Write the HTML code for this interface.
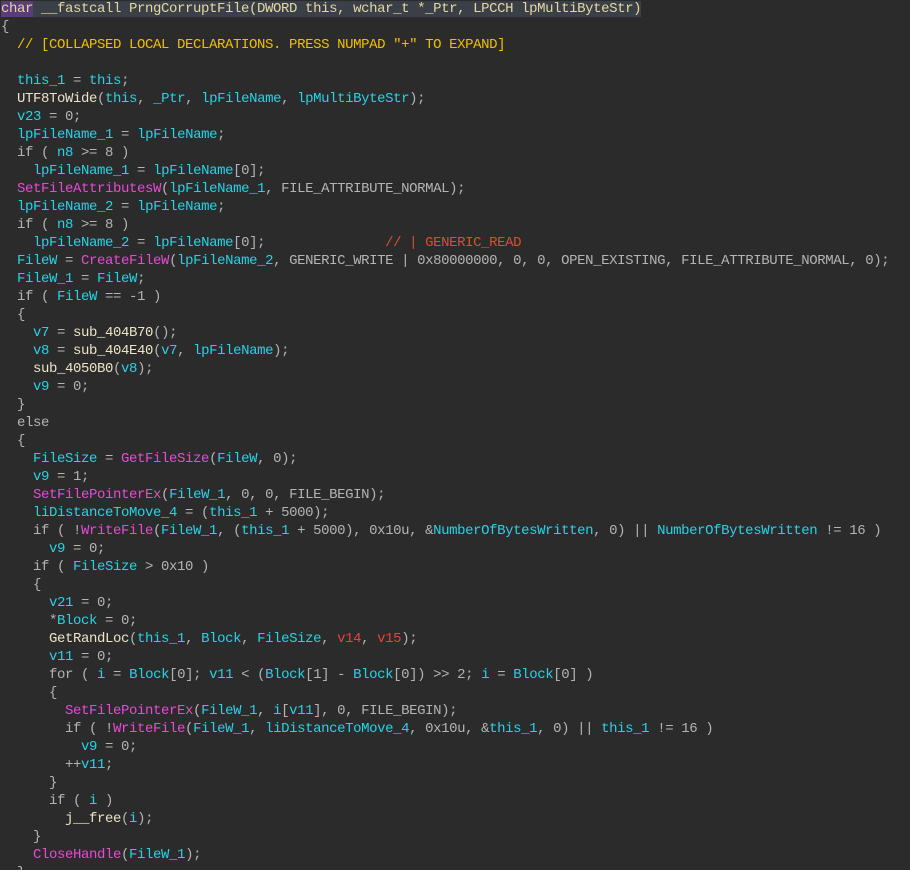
<!DOCTYPE html>
<html><head><meta charset="utf-8"><style>
html,body{margin:0;padding:0;background:#2b2b2b;width:910px;height:870px;overflow:hidden}
pre{margin:0;padding:0 0 0 1px;font-family:"Liberation Mono","DejaVu Sans Mono",monospace;font-size:14px;letter-spacing:-0.4px;line-height:18px;color:#b4b4b4;white-space:pre}
.v{color:#27d3e6}.f{color:#e84ad6}.u{color:#ece4c6}.r{color:#e8413c}.c{color:#d9502e}.y{color:#f0c000}
.h{background:#3b3f47;color:#e4d8a2}.k{background:#5b3c7a}
</style></head><body><pre><span class="h"><span class="k">char</span> __fastcall PrngCorruptFile(DWORD this, wchar_t *_Ptr, LPCCH lpMultiByteStr)</span>
{
  <span class="y">// [COLLAPSED LOCAL DECLARATIONS. PRESS NUMPAD "+" TO EXPAND]</span>

  <span class="v">this_1</span> = <span class="v">this</span>;
  <span class="u">UTF8ToWide</span>(<span class="v">this</span>, <span class="v">_Ptr</span>, <span class="v">lpFileName</span>, <span class="v">lpMultiByteStr</span>);
  <span class="v">v23</span> = 0;
  <span class="v">lpFileName_1</span> = <span class="v">lpFileName</span>;
  if ( <span class="v">n8</span> &gt;= 8 )
    <span class="v">lpFileName_1</span> = <span class="v">lpFileName</span>[0];
  <span class="f">SetFileAttributesW</span>(<span class="v">lpFileName_1</span>, FILE_ATTRIBUTE_NORMAL);
  <span class="v">lpFileName_2</span> = <span class="v">lpFileName</span>;
  if ( <span class="v">n8</span> &gt;= 8 )
    <span class="v">lpFileName_2</span> = <span class="v">lpFileName</span>[0];               <span class="c">// | GENERIC_READ</span>
  <span class="v">FileW</span> = <span class="f">CreateFileW</span>(<span class="v">lpFileName_2</span>, GENERIC_WRITE | 0x80000000, 0, 0, OPEN_EXISTING, FILE_ATTRIBUTE_NORMAL, 0);
  <span class="v">FileW_1</span> = <span class="v">FileW</span>;
  if ( <span class="v">FileW</span> == -1 )
  {
    <span class="v">v7</span> = <span class="u">sub_404B70</span>();
    <span class="v">v8</span> = <span class="u">sub_404E40</span>(<span class="v">v7</span>, <span class="v">lpFileName</span>);
    <span class="u">sub_4050B0</span>(<span class="v">v8</span>);
    <span class="v">v9</span> = 0;
  }
  else
  {
    <span class="v">FileSize</span> = <span class="f">GetFileSize</span>(<span class="v">FileW</span>, 0);
    <span class="v">v9</span> = 1;
    <span class="f">SetFilePointerEx</span>(<span class="v">FileW_1</span>, 0, 0, FILE_BEGIN);
    <span class="v">liDistanceToMove_4</span> = (<span class="v">this_1</span> + 5000);
    if ( !<span class="f">WriteFile</span>(<span class="v">FileW_1</span>, (<span class="v">this_1</span> + 5000), 0x10u, &amp;<span class="v">NumberOfBytesWritten</span>, 0) || <span class="v">NumberOfBytesWritten</span> != 16 )
      <span class="v">v9</span> = 0;
    if ( <span class="v">FileSize</span> &gt; 0x10 )
    {
      <span class="v">v21</span> = 0;
      *<span class="v">Block</span> = 0;
      <span class="u">GetRandLoc</span>(<span class="v">this_1</span>, <span class="v">Block</span>, <span class="v">FileSize</span>, <span class="r">v14</span>, <span class="r">v15</span>);
      <span class="v">v11</span> = 0;
      for ( <span class="v">i</span> = <span class="v">Block</span>[0]; <span class="v">v11</span> &lt; (<span class="v">Block</span>[1] - <span class="v">Block</span>[0]) &gt;&gt; 2; <span class="v">i</span> = <span class="v">Block</span>[0] )
      {
        <span class="f">SetFilePointerEx</span>(<span class="v">FileW_1</span>, <span class="v">i</span>[<span class="v">v11</span>], 0, FILE_BEGIN);
        if ( !<span class="f">WriteFile</span>(<span class="v">FileW_1</span>, <span class="v">liDistanceToMove_4</span>, 0x10u, &amp;<span class="v">this_1</span>, 0) || <span class="v">this_1</span> != 16 )
          <span class="v">v9</span> = 0;
        ++<span class="v">v11</span>;
      }
      if ( <span class="v">i</span> )
        <span class="u">j__free</span>(<span class="v">i</span>);
    }
    <span class="f">CloseHandle</span>(<span class="v">FileW_1</span>);
  }
</pre></body></html>
